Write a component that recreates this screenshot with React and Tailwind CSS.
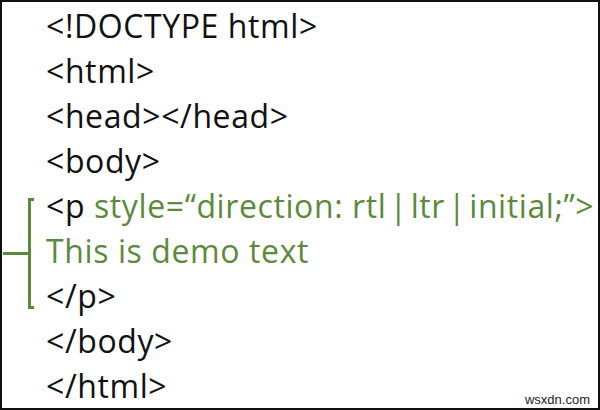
const green = "text-[#5b8a3c]";

function Line({ children, className = "" }) {
  return <div className={`h-[45px] whitespace-nowrap ${className}`}>{children}</div>;
}

function Bar() {
  return <span className="mx-[3px]">|</span>;
}

export default function App() {
  return (
    <div className="relative h-[410px] w-[600px] overflow-hidden border-2 border-[#111] bg-white font-['Open_Sans',sans-serif] text-[32px] leading-[45px] tracking-[0.6px] text-[#111] [font-variant-ligatures:none]">
      <div className="mt-[1px] flex flex-col">
        <Line className="pl-[44px]">&lt;!DOCTYPE html&gt;</Line>
        <Line className="pl-[44px]">&lt;html&gt;</Line>
        <Line className="pl-[44px]">&lt;head&gt;&lt;/head&gt;</Line>
        <Line className="pl-[44px]">&lt;body&gt;</Line>

        {/* bracketed paragraph block */}
        <div className="flex">
          <div className="ml-[1px] mb-[9px] mt-[15px] flex w-[25px] items-center">
            <div className="h-[3px] w-full bg-[#5b8a3c]" />
          </div>
          <div className="mb-[9px] mt-[15px] w-[6px] border-y-[3px] border-l-[3px] border-[#5b8a3c]" />
          <div className="ml-[12px] flex flex-col">
            <Line>
              &lt;p{" "}
              <span className={green}>
                style=“direction: rtl<Bar />ltr<Bar />initial;”&gt;
              </span>
            </Line>
            <Line className={green}>This is demo text</Line>
            <Line>&lt;/p&gt;</Line>
          </div>
        </div>

        <Line className="pl-[44px]">&lt;/body&gt;</Line>
        <Line className="pl-[44px]">&lt;/html&gt;</Line>
      </div>
      <span className="absolute bottom-[2px] right-[8px] font-['Liberation_Sans',sans-serif] text-[13px] leading-none tracking-normal text-[#222]">
        wsxdn.com
      </span>
    </div>
  );
}
